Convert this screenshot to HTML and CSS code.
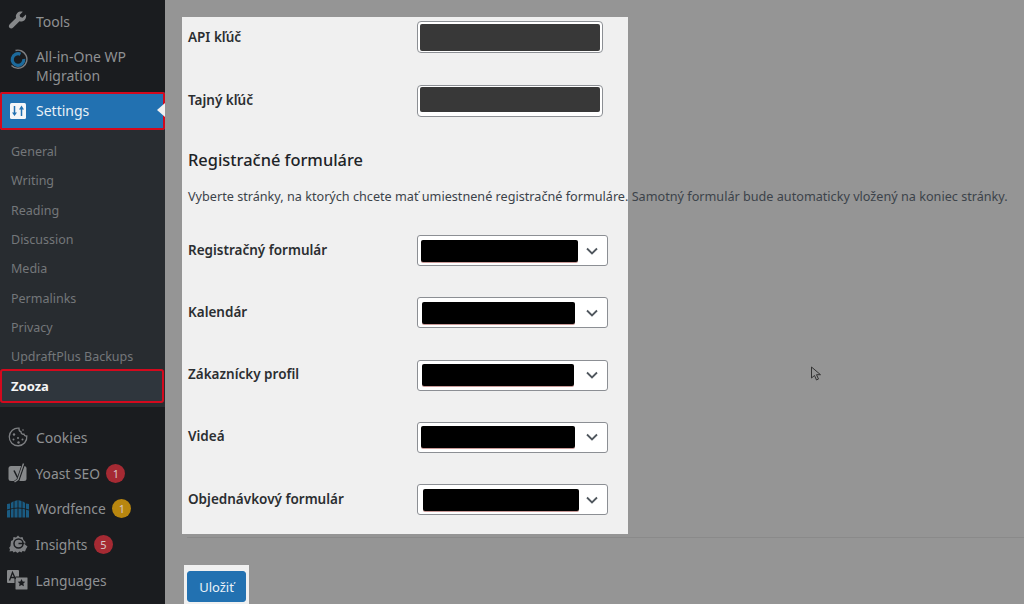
FILE: index.html
```html
<!DOCTYPE html>
<html lang="sk">
<head>
<meta charset="utf-8">
<title>Zooza</title>
<link rel="stylesheet" href="styles.css">
</head>
<body>
<div class="page">
  <nav class="side">
    <a class="item"><svg class="ico" viewBox="0 0 20 20"><path fill="#86888a" d="M17.900 3.600l-3.300 3.100-2.300-.6-.7-2.200 3.200-3.200C12.900.1 10.700.5 9.300 1.900 7.900 3.300 7.500 5.200 8.100 6.900L1.700 13.200c-1.100 1.100-1.100 2.600-.2 3.600 1 1 2.600.9 3.700-.2l6.300-6.400c1.800.6 3.800.2 5.200-1.200 1.400-1.400 1.800-3.600 1.200-5.400z"/></svg><span>Tools</span></a>
    <a class="item item-tall"><svg class="ico" viewBox="0 0 20 20"><path fill="none" stroke="#1c6a9c" stroke-width="3.200" d="M12.500 5.300A5.800 5.800 0 1 0 15.800 10"/><path fill="none" stroke="#7d7f82" stroke-width="1.400" d="M7.500 1.500A9 9 0 1 1 3.500 16.500"/></svg><span>All-in-One WP<br>Migration</span></a>
    <a class="item item-current"><svg class="ico" viewBox="0 0 20 20"><rect x="2" y="2" width="16" height="16" rx="1.500" fill="#f4f6f8"/><path stroke="#2271b1" stroke-width="1.500" fill="none" d="M6.500 5v8M13.500 7v8"/><path fill="#2271b1" d="M4 11.500h5L6.500 15zM11 8.500h5L13.500 4.500z"/></svg><span>Settings</span></a>
    <div class="sub">
      <a class="sub-item">General</a>
      <a class="sub-item">Writing</a>
      <a class="sub-item">Reading</a>
      <a class="sub-item">Discussion</a>
      <a class="sub-item">Media</a>
      <a class="sub-item">Permalinks</a>
      <a class="sub-item">Privacy</a>
      <a class="sub-item">UpdraftPlus Backups</a>
      <a class="sub-current">Zooza</a>
    </div>
    <a class="item item-cookies"><svg class="ico" viewBox="0 0 20 20"><path fill="none" stroke="#7d7f82" stroke-width="1.300" d="M11 1.200A8.800 8.800 0 1 0 18.800 9c-1.500.3-2.600-.4-2.900-1.800-1.600.3-3-.8-2.900-2.500-1.300-.2-2.100-1.600-2-3.500z"/><circle cx="6" cy="7.500" r="1.200" fill="#7d7f82"/><circle cx="5.500" cy="12.500" r="1" fill="#7d7f82"/><circle cx="10" cy="11" r="1" fill="#7d7f82"/><circle cx="10.500" cy="15.500" r="1.200" fill="#7d7f82"/><circle cx="14.500" cy="12.500" r="1" fill="#7d7f82"/><circle cx="15" cy="3" r=".8" fill="#7d7f82"/></svg><span>Cookies</span></a>
    <a class="item item-low"><svg class="ico" viewBox="0 0 20 20"><rect x="0.500" y="3" width="18" height="15" rx="2.500" fill="#86888a"/><path fill="none" stroke="#1a1c1f" stroke-width="1.500" d="M6 7.500l3.500 7"/><path fill="none" stroke="#1a1c1f" stroke-width="3.200" d="M15.500 1l-5.500 16-3.500 2.500"/><path fill="none" stroke="#86888a" stroke-width="1.400" d="M15.500 .500l-5.500 16-3.500 2.500"/></svg><span>Yoast SEO</span><b class="badge badge-red">1</b></a>
    <a class="item item-low"><svg class="ico ico-wide" viewBox="0 0 22 20"><path fill="#1a5b82" d="M0 5l3-.5 3-2 5-1.500 5 1.500 3 2 3 .5v13.500H0z"/><path stroke="#1a1c1f" stroke-width=".9" fill="none" d="M3.500 4v15M7 2v17M11 1v18M15 2v17M18.500 4v15M0 11q11-4 22 0"/></svg><span>Wordfence</span><b class="badge badge-amber">1</b></a>
    <a class="item item-low"><svg class="ico ico-wide" viewBox="0 0 22 20"><path fill="#7d7f82" d="M4 7l2-1 .5-3 2.500.5L11 1.500 13 3.500l2.500-.5 1 3 2 2-.5 2.500 2.500 2-1.500 2.500-1 2.500-2.500-.5-1 1.500-2-1-2 1.500-2-1.500-2 1-1-1.500-3 .5.500-2.500-1-1 1.500-2z"/><circle cx="11.500" cy="9.500" r="4.500" fill="none" stroke="#1a1c1f" stroke-width="1.500"/><path d="M11.500 9.500h6" stroke="#1a1c1f" stroke-width="1.500"/></svg><span>Insights</span><b class="badge badge-red">5</b></a>
    <a class="item item-low"><svg class="ico ico-wide" viewBox="0 0 22 20"><rect x="0" y="0" width="12" height="13" rx="1" fill="#86888a"/><rect x="8" y="7" width="13" height="13" rx="1" fill="#86888a" stroke="#1a1c1f"/><path fill="none" stroke="#1a1c1f" stroke-width="1.300" d="M2.500 10.500L5.500 2.500 8.500 9M3.500 7.500h4"/><path fill="#1a1c1f" d="M14.500 9l1.200 2.500 2.600.3-1.900 1.800.5 2.600-2.400-1.300-2.400 1.300.5-2.600-1.900-1.800 2.600-.3z"/></svg><span>Languages</span></a>
  </nav>
  <main class="main">
    <form class="panel">
      <div class="row row-api"><label class="label">API kľúč</label><div class="field"><i class="mask mask-api"></i></div></div>
      <div class="row row-secret"><label class="label">Tajný kľúč</label><div class="field"><i class="mask mask-secret"></i></div></div>
      <h2 class="title">Registračné formuláre</h2>
      <p class="desc">Vyberte stránky, na ktorých chcete mať umiestnené registračné formuláre. Samotný formulár bude automaticky vložený na koniec stránky.</p>
      <div class="row row-select"><label class="label">Registračný formulár</label><div class="select"><i class="mask mask-a"></i><svg class="chev" viewBox="0 0 12 8"><path d="M1 1.500l5 5 5-5" fill="none" stroke="#50575e" stroke-width="1.800"/></svg></div></div>
      <div class="row row-select"><label class="label">Kalendár</label><div class="select"><i class="mask mask-b"></i><svg class="chev" viewBox="0 0 12 8"><path d="M1 1.500l5 5 5-5" fill="none" stroke="#50575e" stroke-width="1.800"/></svg></div></div>
      <div class="row row-select"><label class="label">Zákaznícky profil</label><div class="select"><i class="mask mask-c"></i><svg class="chev" viewBox="0 0 12 8"><path d="M1 1.500l5 5 5-5" fill="none" stroke="#50575e" stroke-width="1.800"/></svg></div></div>
      <div class="row row-select"><label class="label">Videá</label><div class="select"><i class="mask mask-e"></i><svg class="chev" viewBox="0 0 12 8"><path d="M1 1.500l5 5 5-5" fill="none" stroke="#50575e" stroke-width="1.800"/></svg></div></div>
      <div class="row row-select"><label class="label">Objednávkový formulár</label><div class="select"><i class="mask mask-d"></i><svg class="chev" viewBox="0 0 12 8"><path d="M1 1.500l5 5 5-5" fill="none" stroke="#50575e" stroke-width="1.800"/></svg></div></div>
    </form>
    <hr class="rule">
    <div class="save"><button class="btn" type="button">Uložiť</button></div>
    <svg class="cursor" viewBox="0 0 12 16"><path d="M1.500 1v11l3-2.500 2 4.500 2-1-2-4.300h4z" fill="#959595" stroke="#333" stroke-width="1"/></svg>
  </main>
</div>
</body>
</html>
```
FILE: styles.css
```css
* { box-sizing: border-box; }
html, body { margin: 0; height: 604px; overflow: hidden; }
body { font-family: "Noto Sans", "Open Sans", sans-serif; font-size: 13.5px; color: #2b2e31; background: #959595; }
.page { display: flex; height: 604px; }

.side { width: 165px; flex: none; background: #1a1c1f; padding-top: 3px; color: #8f9193; font-size: 14px; position: relative; }
.item { display: flex; align-items: center; height: 36px; padding-left: 8px; gap: 8px; }
.item-tall { height: 53px; line-height: 19px; padding-top: 1px; }
.item-tall .ico { margin-top: -2px; margin-bottom: 12px; }
.item-low { height: 35.600px; font-size: 13.800px; gap: 7.500px; }
.ico { width: 20px; height: 20px; flex: none; }
.ico-wide { width: 22px; margin-left: -1px; margin-right: -1px; }
.item-current { height: 38px; background: #2271b1; color: #e8f0f6; outline: 2px solid #d3091d; outline-offset: -2px; position: relative; border-radius: 2px; padding-bottom: 1px; }
.item-current::after { content: ""; position: absolute; right: 0; top: 11px; border: 7px solid transparent; border-left: 0; border-right: 8px solid #f0f0f0; }
.sub { background: #282c30; height: 277px; padding-top: 7px; color: #74777a; font-size: 12.500px; }
.sub-item { display: flex; align-items: center; height: 29.300px; padding-left: 11px; }
.sub-current { display: flex; align-items: center; height: 34px; margin-top: -2px; padding-left: 11px; background: #2f363d; color: #f5f5f5; font-weight: 700; font-size: 13px; outline: 2px solid #d3091d; outline-offset: -2px; border-radius: 3px; margin-right: 1px; }
.item-cookies { margin-top: 12px; height: 36.500px; }
.badge { display: flex; align-items: center; justify-content: center; width: 19px; height: 19px; border-radius: 50%; font-size: 11px; font-weight: 400; color: #d8c8c8; margin-left: -1px; }
.badge-red { background: #a52a33; }
.badge-amber { background: #b8860f; }

.main { flex: 1; min-width: 0; padding: 17px 0 0 17px; position: relative; }
.panel { width: 446px; height: 517px; background: #f0f0f0; padding: 4px 0 0 6px; white-space: nowrap; }
.row { display: flex; align-items: center; }
.row-api { height: 32px; }
.row-api .label { padding-bottom: 0; }
.row-secret { height: 31px; margin-top: 32px; }
.row-select { height: 31px; margin-bottom: 31.250px; }
.label { width: 229px; font-weight: 600; font-size: 13.500px; color: #2b2e31; padding-bottom: 2px; }
.field { width: 186px; height: 32px; border: 1px solid #8c8f94; border-radius: 4px; background: #fff; padding: 1.500px 2px; display: flex; }
.select { width: 191px; height: 31px; border: 1px solid #8c8f94; border-radius: 3px; background: #fff; display: flex; align-items: center; padding-left: 3px; }
.mask { display: block; border-radius: 2px; height: 22px; background: #000; box-shadow: 0 1px 0 #c99a98; }
.mask-api { width: 180px; height: 27px; background: #383838; box-shadow: none; }
.mask-secret { width: 182px; height: 25px; background: #383838; box-shadow: none; }
.mask-a { width: 157px; }
.mask-b { width: 153px; margin-left: 1px; }
.mask-c { width: 152px; margin-left: 1px; }
.mask-d { width: 156px; margin-left: 2px; }
.mask-e { width: 154px; }
.chev { width: 12px; height: 8px; margin-left: auto; margin-right: 9px; }
.title { font-size: 16.400px; font-weight: 500; margin: 33px 0 0; line-height: 22px; color: #1d2327; }
.desc { margin: 16px 0 30px; font-size: 12.650px; line-height: 18px; color: #3c434a; }

.rule { border: 0; border-top: 1px solid #8a8a8a; margin: 3px 0 0 5px; }
.save { width: 65px; height: 39px; margin: 27px 0 0 2px; background: #f0f0f0; padding: 6px 0 0 3px; }
.btn { display: block; width: 59px; height: 31px; padding: 0; border: 1px solid #2271b1; border-radius: 3px; background: #2271b1; color: #eaf2f8; font: 13px "Noto Sans", "Open Sans", sans-serif; }
.cursor { position: absolute; left: 645px; top: 366px; width: 12px; height: 16px; }
```
